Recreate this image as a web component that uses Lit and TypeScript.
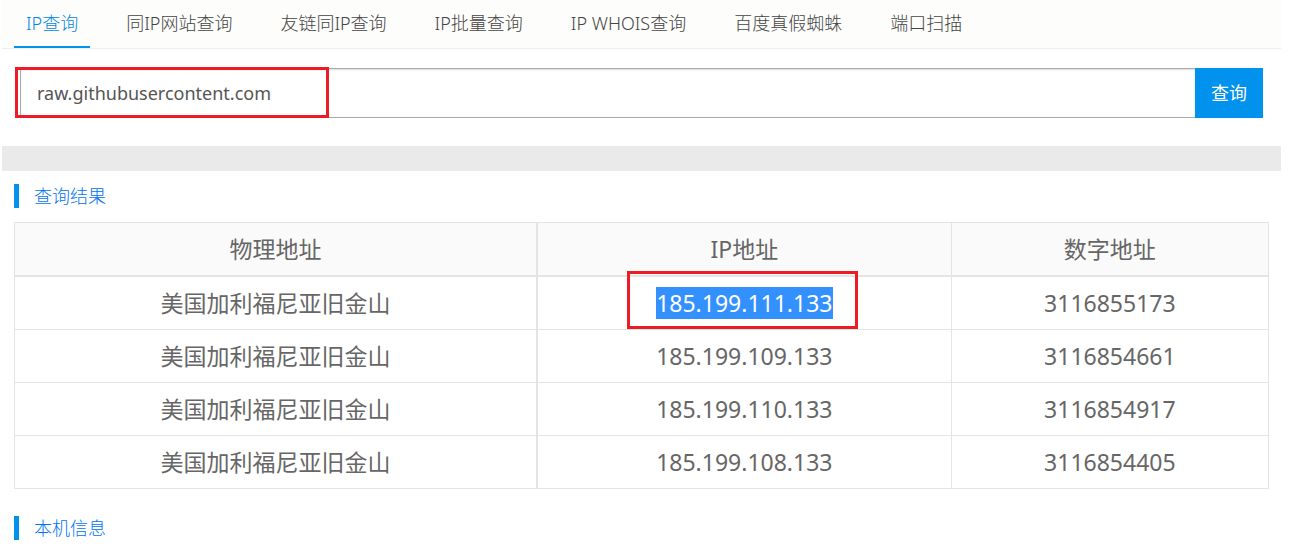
import { LitElement, html, css } from "lit";
import { customElement, property, state } from "lit/decorators.js";
import { classMap } from "lit/directives/class-map.js";

interface Row {
  place: string;
  ip: string;
  num: string;
}

const TABS = ["IP查询", "同IP网站查询", "友链同IP查询", "IP批量查询", "IP WHOIS查询", "百度真假蜘蛛", "端口扫描"];

const ROWS: Row[] = [
  { place: "美国加利福尼亚旧金山", ip: "185.199.111.133", num: "3116855173" },
  { place: "美国加利福尼亚旧金山", ip: "185.199.109.133", num: "3116854661" },
  { place: "美国加利福尼亚旧金山", ip: "185.199.110.133", num: "3116854917" },
  { place: "美国加利福尼亚旧金山", ip: "185.199.108.133", num: "3116854405" },
];

@customElement("section-title")
class SectionTitle extends LitElement {
  @property() text = "";

  static styles = css`
    :host {
      display: block;
    }
    .title {
      margin: 0;
      padding-left: 15px;
      border-left: 5px solid #0092ec;
      color: #0073f5;
      font-size: 18px;
      font-weight: 300;
      line-height: 24px;
    }
  `;

  render() {
    return html`<h2 class="title">${this.text}</h2>`;
  }
}

@customElement("app-root")
class AppRoot extends LitElement {
  @state() private active = 0;
  @state() private query = "raw.githubusercontent.com";

  static styles = css`
    :host {
      display: block;
      background: #fff;
      color: #666;
      font-family: "Noto Sans", "Noto Sans CJK SC", sans-serif;
    }
    .page {
      margin: 0 29px 0 2px;
    }
    .tabs {
      display: flex;
      gap: 24px;
      padding-left: 12px;
      background: #fdfdfb;
      border-bottom: 1px solid #eee;
    }
    .tab {
      padding: 0 12px;
      border-bottom: 2px solid transparent;
      color: #444;
      font-size: 18px;
      font-weight: 300;
      line-height: 46px;
      text-decoration: none;
      white-space: nowrap;
    }
    .tab.active {
      color: #0088e6;
      border-bottom-color: #0092ec;
    }
    .search {
      display: flex;
      padding: 19px 18px 28px;
    }
    .field {
      position: relative;
      display: flex;
      flex: 1;
    }
    .query {
      flex: 1;
      min-width: 0;
      box-sizing: border-box;
      height: 50px;
      margin: 0;
      padding: 0 16px;
      border: 1px solid #aaa;
      border-right: 0;
      border-radius: 0;
      outline: 0;
      background: #fff;
      box-shadow: inset 0 1px 2px #ddd;
      color: #555;
      font-family: inherit;
      font-size: 18px;
    }
    .submit {
      padding: 0 16px 3px;
      border: 0;
      background: #0092ec;
      color: #fff;
      font-family: inherit;
      font-size: 18px;
    }
    .mark {
      position: absolute;
      box-sizing: border-box;
      border: 3px solid #ed1c24;
      pointer-events: none;
    }
    .mark-query {
      top: -1px;
      bottom: 0;
      left: -5px;
      width: 314px;
    }
    .mark-ip {
      inset: -16px -25px -10px -29px;
    }
    .band {
      height: 25px;
      background: #eaeaea;
    }
    .results {
      display: grid;
      gap: 14px;
      padding: 13px 12px 27px;
    }
    .local {
      padding: 0 12px;
    }
    .table {
      width: 100%;
      table-layout: fixed;
      border-collapse: separate;
      border-spacing: 0;
      border-top: 1px solid #e4e4e4;
      border-left: 1px solid #e4e4e4;
      font-size: 23px;
      line-height: 32px;
      text-align: center;
    }
    .cell {
      box-sizing: border-box;
      padding: 10px;
      border-right: 1px solid #e4e4e4;
      border-bottom: 1px solid #e4e4e4;
    }
    .cell:first-child {
      border-right-width: 2px;
    }
    .head {
      background: #fafafa;
      border-bottom-width: 2px;
      font-weight: 400;
    }
    .col-place {
      width: 41.7%;
    }
    .col-ip {
      width: 33%;
    }
    .picked {
      position: relative;
      display: inline-block;
      vertical-align: top;
      background: #3390ff;
      color: #fff;
    }
  `;

  render() {
    return html`
      <main class="page">
        <nav class="tabs">
          ${TABS.map(
            (tab, i) => html`<a
              href="#"
              class=${classMap({ tab: true, active: i === this.active })}
              @click=${(e: Event) => {
                e.preventDefault();
                this.active = i;
              }}
              >${tab}</a
            >`
          )}
        </nav>
        <form class="search" @submit=${(e: Event) => e.preventDefault()}>
          <div class="field">
            <input
              class="query"
              type="text"
              aria-label="IP查询"
              .value=${this.query}
              @input=${(e: Event) => (this.query = (e.target as HTMLInputElement).value)}
            />
            <span class="mark mark-query"></span>
          </div>
          <button class="submit" type="submit">查询</button>
        </form>
        <div class="band"></div>
        <section class="results">
          <section-title text="查询结果"></section-title>
          <table class="table">
            <thead>
              <tr>
                <th class="cell head col-place" scope="col">物理地址</th>
                <th class="cell head col-ip" scope="col">IP地址</th>
                <th class="cell head" scope="col">数字地址</th>
              </tr>
            </thead>
            <tbody>
              ${ROWS.map(
                (row, i) => html`<tr>
                  <td class="cell">${row.place}</td>
                  <td class="cell">
                    ${i === 0
                      ? html`<span class="picked">${row.ip}<span class="mark mark-ip"></span></span>`
                      : row.ip}
                  </td>
                  <td class="cell">${row.num}</td>
                </tr>`
              )}
            </tbody>
          </table>
        </section>
        <section class="local">
          <section-title text="本机信息"></section-title>
        </section>
      </main>
    `;
  }
}
